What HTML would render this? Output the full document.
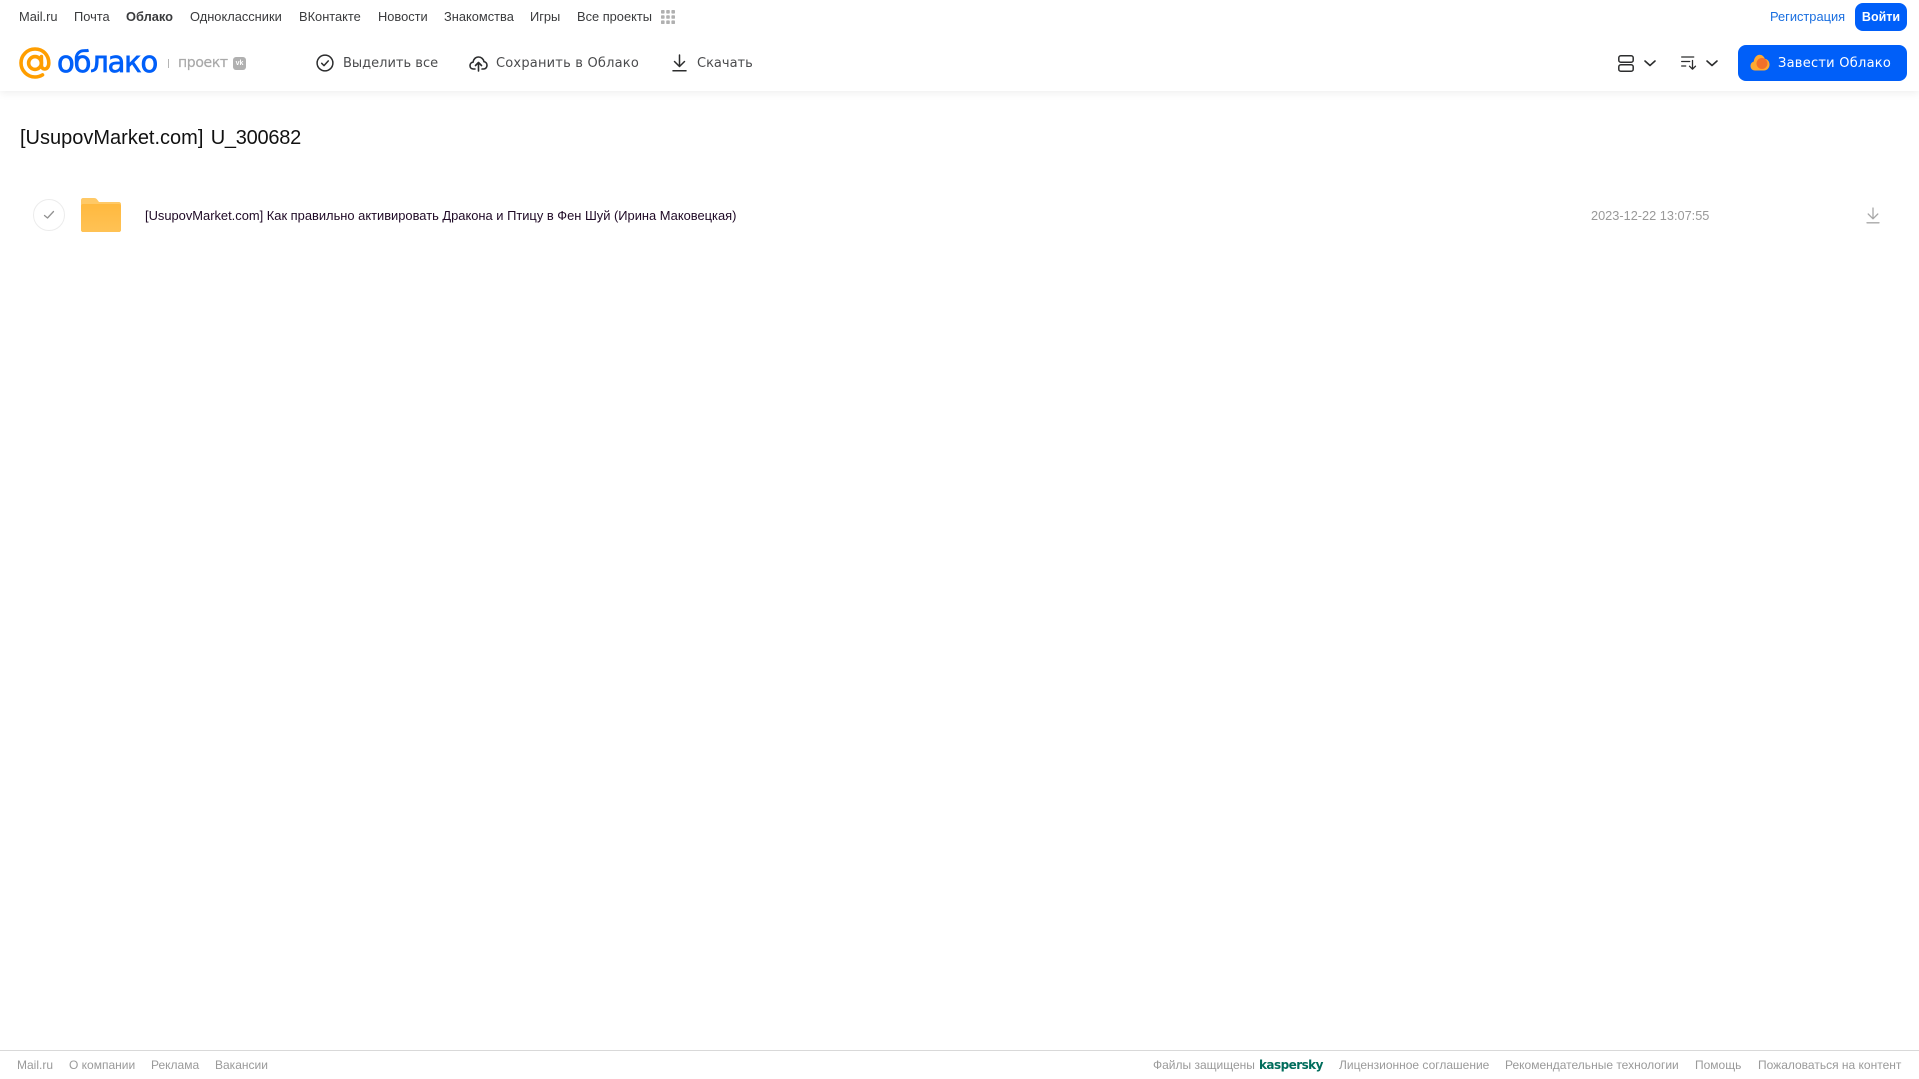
<!DOCTYPE html>
<html lang="ru">
<head>
<meta charset="utf-8">
<title>[UsupovMarket.com] U_300682</title>
<style>
html,body{margin:0;padding:0;background:#fff;width:1919px;height:1079px;overflow:hidden;font-family:"Liberation Sans","DejaVu Sans",sans-serif}
.t{position:absolute;white-space:nowrap;line-height:16px}
.n{font-size:12.85px;color:#3a3b3d;top:9px}
.a{color:#4a4b4d;top:56px;font-family:"DejaVu Sans","Liberation Sans",sans-serif;font-size:13px}
.f{font-size:12px;color:#9a9a9a;top:1057px}
svg{position:absolute;overflow:visible}
#head{position:absolute;left:0;top:0;width:1919px;height:91px;background:#fff;box-shadow:0 2px 8px rgba(0,0,0,.07)}
</style>
</head>
<body>
<div id="head"></div>

<span class="t n" style="left:19px">Mail.ru</span>
<span class="t n" style="left:74px">Почта</span>
<span class="t n" style="left:126px;font-weight:bold">Облако</span>
<span class="t n" style="left:190px">Одноклассники</span>
<span class="t n" style="left:299px">ВКонтакте</span>
<span class="t n" style="left:378px">Новости</span>
<span class="t n" style="left:444px">Знакомства</span>
<span class="t n" style="left:530px">Игры</span>
<span class="t n" style="left:577px">Все проекты</span>
<svg style="left:661px;top:10px" width="14" height="14" viewBox="0 0 14 14" fill="#b0b0b0"><rect x="0" y="0" width="3.6" height="3.6" rx=".8"/><rect x="5.2" y="0" width="3.6" height="3.6" rx=".8"/><rect x="10.4" y="0" width="3.6" height="3.6" rx=".8"/><rect x="0" y="5.2" width="3.6" height="3.6" rx=".8"/><rect x="5.2" y="5.2" width="3.6" height="3.6" rx=".8"/><rect x="10.4" y="5.2" width="3.6" height="3.6" rx=".8"/><rect x="0" y="10.4" width="3.6" height="3.6" rx=".8"/><rect x="5.2" y="10.4" width="3.6" height="3.6" rx=".8"/><rect x="10.4" y="10.4" width="3.6" height="3.6" rx=".8"/></svg>

<span class="t n" style="left:1770px;color:#1a6fe0">Регистрация</span>
<div style="position:absolute;left:1855px;top:3px;width:52px;height:28px;background:#005ff9;border-radius:8px;color:#fff;font-size:12.5px;font-weight:bold;line-height:28px;text-align:center">Войти</div>

<svg style="left:19px;top:47px" width="32" height="33" viewBox="0 0 32 33" fill="none" stroke="#ff9e00" stroke-width="3.6"><circle cx="16" cy="16" r="6.4"/><path d="M22.4 9.6V18c0 2.6 1.5 4 3.2 4 2.200 0 4.200-2 4.200-6C29.800 8 24 2 16 2 8.300 2 2 8.300 2 16s6.300 14 14 14c3 0 5.300-.7 7.500-2.100" stroke-linecap="round"/></svg>
<span class="t" style="left:57px;top:44px;font-size:29px;line-height:36px;font-family:'DejaVu Sans',sans-serif;color:#005ff9;letter-spacing:-1.200px;-webkit-text-stroke:.7px #005ff9">облако</span>
<div style="position:absolute;left:168px;top:59px;width:1px;height:9px;background:#b5b5b5"></div>
<span class="t" style="left:178px;top:55px;font-size:14px;font-family:'DejaVu Sans',sans-serif;color:#a9a9a9;letter-spacing:-.35px;-webkit-text-stroke:.2px #a9a9a9">проект</span>
<div style="position:absolute;left:233px;top:57px;width:13px;height:13px;background:#b0b0b0;border-radius:3px;color:#fff;font-size:7px;font-weight:bold;line-height:13px;text-align:center">vk</div>

<svg style="left:316px;top:54px" width="18" height="18" viewBox="0 0 18 18" fill="none" stroke="#2c2d2e" stroke-width="1.500"><circle cx="9" cy="9" r="7.900"/><path d="M5.700 9.300l2.300 2.300 4.300-4.700" stroke-linecap="round" stroke-linejoin="round"/></svg>
<span class="t a" style="left:343px">Выделить все</span>
<svg style="left:469px;top:54px" width="19" height="18" viewBox="0 0 19 18" fill="none" stroke="#2c2d2e" stroke-width="1.600" stroke-linecap="round" stroke-linejoin="round"><path d="M6 15H4.500C2.400 15 1 13.500 1 11.600c0-1.800 1.300-3.200 3-3.400C4.500 5 6.800 3 9.500 3c2.800 0 5 2 5.500 4.700 1.800.2 3 1.800 3 3.600 0 2-1.400 3.700-3.500 3.700H13"/><path d="M9.500 17V9M6.500 11.500l3-3 3 3"/></svg>
<span class="t a" style="left:496px;letter-spacing:.2px">Сохранить в Облако</span>
<svg style="left:672px;top:54px" width="15" height="18" viewBox="0 0 15 18" fill="none" stroke="#2c2d2e" stroke-width="1.500" stroke-linecap="round" stroke-linejoin="round"><path d="M7.500 1v11M2.500 7.500l5 5 5-5M1 16.800h13"/></svg>
<span class="t a" style="left:697px">Скачать</span>

<svg style="left:1618px;top:55px" width="16" height="17" viewBox="0 0 16 17" fill="none" stroke="#2c2d2e" stroke-width="1.500"><rect x=".8" y=".8" width="14.400" height="6.400" rx="2"/><rect x=".8" y="9.800" width="14.400" height="6.400" rx="2"/></svg>
<svg style="left:1644px;top:60px" width="12" height="7" viewBox="0 0 12 7" fill="none" stroke="#2c2d2e" stroke-width="1.600" stroke-linecap="round" stroke-linejoin="round"><path d="M1 1l5 4.500L11 1"/></svg>
<svg style="left:1681px;top:56px" width="16" height="14" viewBox="0 0 16 14" fill="none" stroke="#2c2d2e" stroke-width="1.300" stroke-linecap="round" stroke-linejoin="round"><path d="M.7 1h12M.7 5.500h8M.7 10h4M11.500 4.500v8.500M8.500 10.200l3 3 3-3"/></svg>
<svg style="left:1706px;top:60px" width="12" height="7" viewBox="0 0 12 7" fill="none" stroke="#2c2d2e" stroke-width="1.600" stroke-linecap="round" stroke-linejoin="round"><path d="M1 1l5 4.500L11 1"/></svg>

<div style="position:absolute;left:1738px;top:45px;width:169px;height:36px;background:#005ff9;border-radius:8px"></div>
<svg style="left:1750px;top:54px" width="20" height="17" viewBox="0 0 20 17"><path d="M5 16.500C2.300 16.500.5 14.500.5 12c0-2.200 1.300-3.900 3.200-4.400C4.300 3.500 6.800.8 9.500.8c2.500 0 4.500 1.700 5.300 4 2.600.3 4.700 2.700 4.700 5.700 0 3.400-2.400 6-5.500 6z" fill="#ffa930"/><circle cx="12" cy="9.500" r="5.500" fill="#f2702a"/></svg>
<span class="t" style="left:1778px;top:56px;font-family:'DejaVu Sans',sans-serif;font-size:13px;color:#fff;letter-spacing:.25px">Завести Облако</span>

<div class="t" style="left:20px;top:126px;font-size:20px;line-height:24px;color:#111">[UsupovMarket.com]<span style="margin-left:2px;letter-spacing:-.25px"> U_300682</span></div>

<div style="position:absolute;left:33px;top:199px;width:30px;height:30px;border:1px solid #ececec;border-radius:50%"></div>
<svg style="left:43px;top:210px" width="12" height="10" viewBox="0 0 12 10" fill="none" stroke="#929292" stroke-width="1.300" stroke-linecap="round" stroke-linejoin="round"><path d="M1.500 5.500L4.500 8l6-6.500"/></svg>
<svg style="left:81px;top:198px" width="40" height="34" viewBox="0 0 40 34"><defs><linearGradient id="g" x1="0" y1="0" x2="0" y2="1"><stop offset="0" stop-color="#ffb93f"/><stop offset="1" stop-color="#ffc255"/></linearGradient></defs><path d="M2 0h11c1.500 0 2.500.6 3.300 1.700L18 4h20c1.100 0 2 .9 2 2v26c0 1.100-.9 2-2 2H2c-1.100 0-2-.9-2-2V2C0 .9.900 0 2 0z" fill="#ffc966"/><path d="M0 8c0-1.100.9-2 2-2h36c1.100 0 2 .9 2 2v24c0 1.100-.9 2-2 2H2c-1.100 0-2-.9-2-2z" fill="url(#g)"/></svg>
<span class="t" style="left:145px;top:208px;font-size:12.9px;color:#1f0a26">[UsupovMarket.com] Как правильно активировать Дракона и Птицу в Фен Шуй (Ирина Маковецкая)</span>
<span class="t" style="left:1591px;top:208px;font-size:12.75px;color:#999">2023-12-22 13:07:55</span>
<svg style="left:1866px;top:207px" width="14" height="17" viewBox="0 0 14 17" fill="none" stroke="#a8a8a8" stroke-width="1.300" stroke-linecap="round" stroke-linejoin="round"><path d="M7 1v10.500M2.200 7l4.800 4.800L11.800 7M1 15.800h12"/></svg>

<div style="position:absolute;left:0;top:1050px;width:1919px;height:1px;background:#d9d9d9"></div>
<span class="t f" style="left:17px">Mail.ru</span>
<span class="t f" style="left:69px">О компании</span>
<span class="t f" style="left:151px">Реклама</span>
<span class="t f" style="left:215px">Вакансии</span>
<span class="t f" style="left:1153px">Файлы защищены</span>
<span class="t f" style="left:1259px;font-family:'DejaVu Sans',sans-serif;font-weight:bold;color:#006d5c;font-size:12px;letter-spacing:-.55px">kaspersky</span>
<span class="t f" style="left:1339px">Лицензионное соглашение</span>
<span class="t f" style="left:1505px">Рекомендательные технологии</span>
<span class="t f" style="left:1695px">Помощь</span>
<span class="t f" style="left:1758px">Пожаловаться на контент</span>
</body>
</html>
